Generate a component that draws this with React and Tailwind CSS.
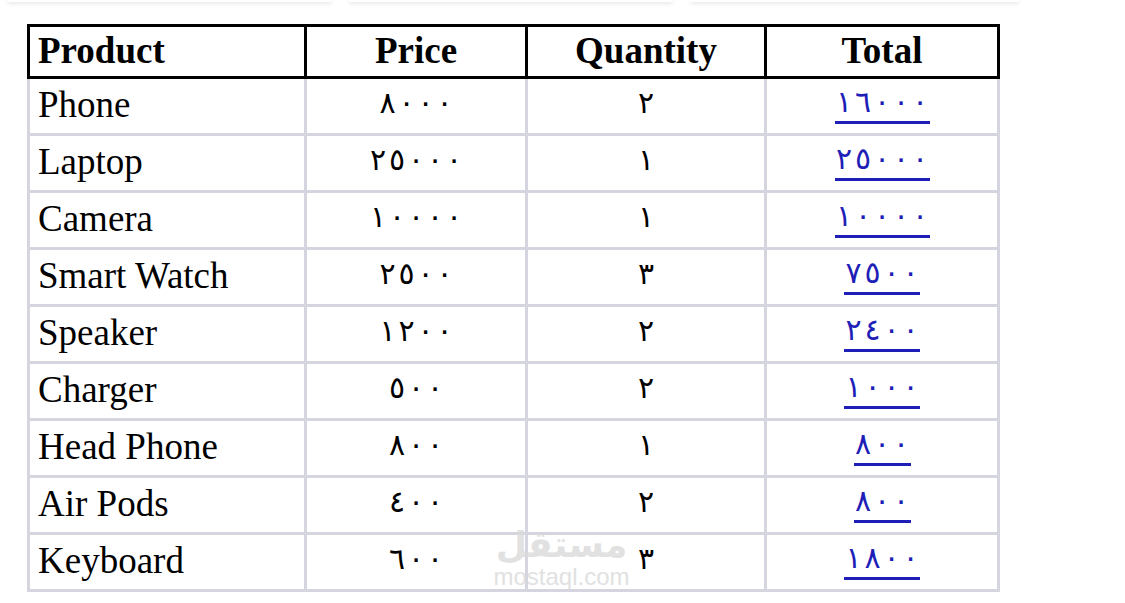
import React from "react";

const rows = [
  ["Phone", "٨٠٠٠", "٢", "١٦٠٠٠"],
  ["Laptop", "٢٥٠٠٠", "١", "٢٥٠٠٠"],
  ["Camera", "١٠٠٠٠", "١", "١٠٠٠٠"],
  ["Smart Watch", "٢٥٠٠", "٣", "٧٥٠٠"],
  ["Speaker", "١٢٠٠", "٢", "٢٤٠٠"],
  ["Charger", "٥٠٠", "٢", "١٠٠٠"],
  ["Head Phone", "٨٠٠", "١", "٨٠٠"],
  ["Air Pods", "٤٠٠", "٢", "٨٠٠"],
  ["Keyboard", "٦٠٠", "٣", "١٨٠٠"],
];

function Digits({ value }) {
  return (
    <span className="inline-flex" dir="ltr">
      {Array.from(value).map((d, i) => (
        <span key={i} className="inline-block w-[19px] text-center">{d}</span>
      ))}
    </span>
  );
}

export default function App() {
  return (
    <div className="relative w-[1125px] h-[603px] bg-white overflow-hidden font-['Liberation_Serif','DejaVu_Sans',serif] text-black">
      <div className="flex pl-[7px] gap-[17px]">
        <div className="w-[325px] h-[2px] rounded-b-xl bg-white shadow-[0_1px_4px_rgba(0,0,0,0.18)]" />
        <div className="w-[324px] h-[2px] rounded-b-xl bg-white shadow-[0_1px_4px_rgba(0,0,0,0.18)]" />
        <div className="w-[329px] h-[2px] rounded-b-xl bg-white shadow-[0_1px_4px_rgba(0,0,0,0.18)]" />
      </div>
      <div className="pt-[22px] pl-[27px]">
        <table className="table-fixed border-collapse w-[973px]">
          <colgroup>
            <col className="w-[277px]" />
            <col className="w-[221px]" />
            <col className="w-[239px]" />
            <col className="w-[233px]" />
          </colgroup>
          <thead>
            <tr className="h-[52px]">
              <th className="border-[3px] border-black text-left pl-[8px] pb-[3px] text-[37px] font-bold leading-none">Product</th>
              <th className="border-[3px] border-black text-center pb-[3px] text-[37px] font-bold leading-none">Price</th>
              <th className="border-[3px] border-black text-center pb-[3px] text-[37px] font-bold leading-none">Quantity</th>
              <th className="border-[3px] border-black text-center pb-[3px] text-[37px] font-bold leading-none">Total</th>
            </tr>
          </thead>
          <tbody>
            {rows.map((r) => (
              <tr key={r[0]} className="h-[57px]">
                <td className="border-[3px] border-[#d5d5df] pl-[8px] pb-[4px] text-[37px] leading-none">{r[0]}</td>
                <td className="border-[3px] border-[#d5d5df] text-center pb-[6px] text-[30px] leading-none"><Digits value={r[1]} /></td>
                <td className="border-[3px] border-[#d5d5df] text-center pb-[6px] text-[30px] leading-none">{r[2]}</td>
                <td className="border-[3px] border-[#d5d5df] text-center pb-[2px] text-[30px] leading-none">
                  <a href="#" className="inline-block text-[#1f1fb8] border-b-[3px] border-[#1f1fb8] pb-[4px] no-underline"><Digits value={r[3]} /></a>
                </td>
              </tr>
            ))}
          </tbody>
        </table>
      </div>
      <div className="absolute left-[493px] top-[524px] w-[137px] flex flex-col items-center pointer-events-none">
        <div className="font-['DejaVu_Sans',sans-serif] font-bold text-[36px] leading-[42px] text-[#dadada] opacity-80">مستقل</div>
        <div className="font-['Liberation_Sans',sans-serif] text-[24px] leading-[22px] text-[#dadada] opacity-80">mostaql.com</div>
      </div>
    </div>
  );
}
